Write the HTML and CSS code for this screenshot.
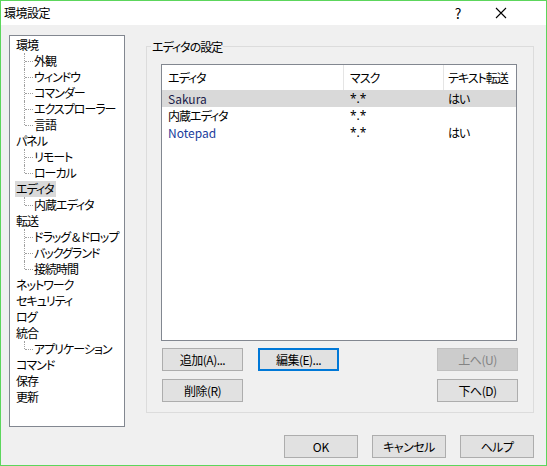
FILE: index.html
```html
<!DOCTYPE html>
<html lang="ja">
<head>
<meta charset="utf-8">
<link rel="stylesheet" href="styles.css">
</head>
<body>
<div class="window">
  <div class="titlebar">
    <span class="title">環境設定</span>
    <span class="help">?</span>
    <span class="close"><svg width="12" height="12" viewBox="0 0 12 12"><path d="M1 1 L11 11 M11 1 L1 11" stroke="#000" stroke-width="1.1" fill="none"/></svg></span>
  </div>
  <div class="content">
    <div class="main">
      <div class="tree">
        <div class="node"><span class="lbl">環境</span></div>
        <div class="node child"><span class="twig"></span><span class="lbl">外観</span></div>
        <div class="node child"><span class="twig"></span><span class="lbl">ウィンドウ</span></div>
        <div class="node child"><span class="twig"></span><span class="lbl">コマンダー</span></div>
        <div class="node child"><span class="twig"></span><span class="lbl">エクスプローラー</span></div>
        <div class="node child last"><span class="twig"></span><span class="lbl">言語</span></div>
        <div class="node"><span class="lbl">パネル</span></div>
        <div class="node child"><span class="twig"></span><span class="lbl">リモート</span></div>
        <div class="node child last"><span class="twig"></span><span class="lbl">ローカル</span></div>
        <div class="node"><span class="lbl sel">エディタ</span></div>
        <div class="node child last"><span class="twig"></span><span class="lbl">内蔵エディタ</span></div>
        <div class="node"><span class="lbl">転送</span></div>
        <div class="node child"><span class="twig"></span><span class="lbl">ドラッグ &amp; ドロップ</span></div>
        <div class="node child"><span class="twig"></span><span class="lbl">バックグランド</span></div>
        <div class="node child last"><span class="twig"></span><span class="lbl">接続時間</span></div>
        <div class="node"><span class="lbl">ネットワーク</span></div>
        <div class="node"><span class="lbl">セキュリティ</span></div>
        <div class="node"><span class="lbl">ログ</span></div>
        <div class="node"><span class="lbl">統合</span></div>
        <div class="node child last"><span class="twig"></span><span class="lbl">アプリケーション</span></div>
        <div class="node"><span class="lbl">コマンド</span></div>
        <div class="node"><span class="lbl">保存</span></div>
        <div class="node"><span class="lbl">更新</span></div>
      </div>
      <div class="group">
        <div class="legend">エディタの設定</div>
        <div class="list">
          <div class="row head">
            <div class="cell c1">エディタ</div>
            <div class="cell c2">マスク</div>
            <div class="cell c3">テキスト転送</div>
          </div>
          <div class="row selrow">
            <div class="cell c1 latin navy">Sakura</div>
            <div class="cell c2 latin mask">*.*</div>
            <div class="cell c3">はい</div>
          </div>
          <div class="row">
            <div class="cell c1">内蔵エディタ</div>
            <div class="cell c2 latin mask">*.*</div>
            <div class="cell c3"></div>
          </div>
          <div class="row">
            <div class="cell c1 latin blue">Notepad</div>
            <div class="cell c2 latin mask">*.*</div>
            <div class="cell c3">はい</div>
          </div>
        </div>
        <div class="btnrow">
          <button class="btn">追加(A)...</button>
          <button class="btn focus">編集(E)...</button>
          <button class="btn disabled push">上へ(U)</button>
        </div>
        <div class="btnrow second">
          <button class="btn">削除(R)</button>
          <button class="btn push">下へ(D)</button>
        </div>
      </div>
    </div>
    <div class="footer">
      <button class="btn small latin">OK</button>
      <button class="btn small">キャンセル</button>
      <button class="btn small">ヘルプ</button>
    </div>
  </div>
</div>
</body>
</html>
```
FILE: styles.css
```css
* { box-sizing: border-box; }
html, body { margin: 0; padding: 0; background: #f0f0f0; }
body {
  font-family: "Noto Sans CJK JP", "Noto Sans", sans-serif;
  font-size: 12px;
  font-feature-settings: "palt";
  letter-spacing: -1px;
  color: #000;
}
.latin { letter-spacing: 0; }
.mask { font-family: "Noto Sans", "Noto Sans CJK JP", sans-serif; font-size: 12px; }
.window {
  width: 547px;
  height: 466px;
  border: 1px solid #5cd65c;
  background: #f0f0f0;
  display: flex;
  flex-direction: column;
}
.titlebar {
  height: 24px;
  background: #fff;
  display: flex;
  align-items: center;
  padding-left: 3px;
}
.title { font-size: 12px; line-height: 16px; flex: 1; letter-spacing: -0.5px; }
.help { font-size: 14px; width: 12px; margin-right: 31px; text-align: center; letter-spacing: 0; }
.close { width: 12px; height: 12px; margin-right: 39px; display: flex; }
.content {
  padding: 10px 12px 0 8px;
  display: flex;
  flex-direction: column;
}
.main { display: flex; align-items: flex-start; }
.tree {
  width: 116px;
  height: 392px;
  background: #fff;
  border: 1px solid #828790;
  padding: 1px 0 0 0;
}
.node {
  height: 16px;
  line-height: 16px;
  display: flex;
  align-items: stretch;
  padding-left: 5px;
  white-space: nowrap;
}
.node.child { padding-left: 14px; }
.lbl { padding: 0 1px; line-height: 16px; }
.lbl.sel { background: #d9d9d9; padding-right: 2px; }
.twig {
  width: 9px;
  height: 16px;
  position: relative;
  flex: none;
}
.twig::before {
  content: "";
  position: absolute;
  left: 0; top: 0; bottom: 0;
  border-left: 1px dotted #a0a0a0;
}
.child.last .twig::before { bottom: 8px; }
.twig::after {
  content: "";
  position: absolute;
  left: 1px; top: 8px; width: 8px;
  border-top: 1px dotted #a0a0a0;
}
.group {
  margin-left: 21px;
  margin-top: 11px;
  width: 388px;
  height: 367px;
  border: 1px solid #dcdcdc;
}
.legend {
  margin-top: -8px;
  margin-left: 4px;
  padding: 0 1px;
  height: 16px;
  line-height: 16px;
  width: max-content;
  background: #f0f0f0;
}
.list {
  margin-top: 9px;
  margin-left: 14px;
  width: 356px;
  height: 277px;
  background: #fff;
  border: 1px solid #828790;
}
.row {
  display: grid;
  grid-template-columns: 182px 100px 72px;
  height: 17px;
  line-height: 17px;
}
.row.head { height: 25px; line-height: 25px; }
.head .c1, .head .c2 { border-right: 1px solid #e5e5e5; }
.cell { white-space: nowrap; overflow: hidden; }
.c1 { padding-left: 6px; }
.c2 { padding-left: 6px; }
.c3 { padding-left: 4px; }
.selrow { background: #d9d9d9; }
.navy { color: #1c1c4a; }
.blue { color: #1a3c9c; }
.btnrow {
  display: flex;
  margin-left: 15px;
  width: 356px;
  margin-top: 7px;
  gap: 15px;
}
.btnrow.second { margin-top: 8px; }
.btn {
  font-family: "Noto Sans CJK JP", "Noto Sans", sans-serif;
  font-size: 12px;
  font-feature-settings: "palt";
  letter-spacing: -0.5px;
  width: 81px;
  height: 23px;
  padding: 0;
  line-height: 20px;
  background: #e1e1e1;
  border: 1px solid #adadad;
  color: #000;
  border-radius: 0;
  text-align: center;
}
.btn.focus { border: 2px solid #0078d7; }
.btn.disabled { background: #cccccc; border-color: #bfbfbf; color: #838383; }
.btn.push { margin-left: auto; }
.footer {
  display: flex;
  justify-content: flex-end;
  gap: 14px;
  margin-top: 8px;
}
.btn.small { width: 74px; }
.btn.latin { letter-spacing: 0; }
```
